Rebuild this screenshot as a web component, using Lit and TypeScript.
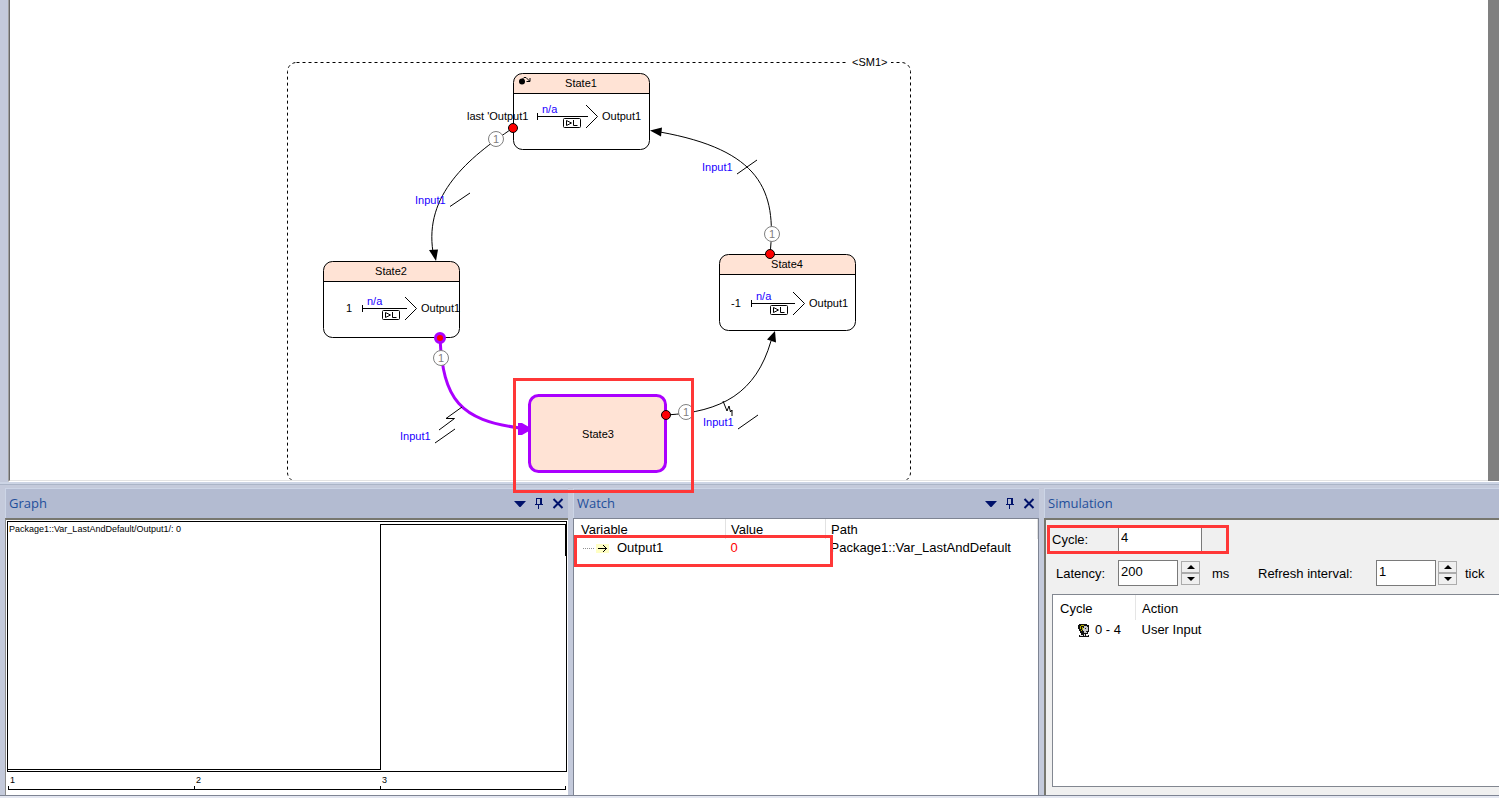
import { LitElement, html, svg, css } from "lit";
import { customElement, property } from "lit/decorators.js";

interface StateNode {
  x: number;
  y: number;
  name: string;
  input: string;
  inputX: number;
  flowY: number;
  barX: number;
  tipX: number;
}

const STATES: StateNode[] = [
  { x: 513, y: 73, name: "State1", input: "last 'Output1", inputX: 467, flowY: 116, barX: 537, tipX: 598 },
  { x: 323, y: 261, name: "State2", input: "1", inputX: 346, flowY: 308, barX: 362, tipX: 417 },
  { x: 719, y: 254, name: "State4", input: "-1", inputX: 731, flowY: 303, barX: 751, tipX: 805 },
];

@customElement("state-canvas")
class StateCanvas extends LitElement {
  static styles = css`
    :host { display: block; position: relative; min-width: 0; min-height: 0; }
    .frame {
      box-sizing: border-box; height: 100%; display: flex;
      border-left: 1px solid #a0a0a0; border-bottom: 1px solid #ffffff;
    }
    .sheet {
      flex: 1; min-width: 0; box-sizing: border-box; background: #fff; overflow: hidden;
      border-left: 1px solid #696969; border-bottom: 1px solid #e3e3e3;
    }
    .edge { flex: 0 0 11px; background: #808080; }
    svg { display: block; width: 100%; height: 100%; font: 11px "Liberation Sans", Arial, sans-serif; }
    .line { fill: none; stroke: #000; stroke-width: 1; }
    .crisp { shape-rendering: crispEdges; }
    .dash { stroke-dasharray: 3 3; }
    .active { fill: none; stroke: #aa00ff; stroke-width: 3; }
    .filled { fill: #ffe3d5; }
    .head { fill: #ffe3d5; }
    .blue { fill: #1a00ff; }
    .mid { text-anchor: middle; }
    .badge { fill: #fff; stroke: #808080; }
    .num { fill: #808080; text-anchor: middle; }
    .mark {
      position: absolute; left: 505px; top: 378px; width: 181px; height: 115px;
      box-sizing: border-box; border: 3px solid #ff3737; z-index: 2; pointer-events: none;
    }
  `;

  private node(s: StateNode) {
    const y = s.flowY;
    const t = s.tipX;
    return svg`
      <path class="head" d="M${s.x + 0.5} ${s.y + 20.5}v-11a9 9 0 0 1 9-9h118a9 9 0 0 1 9 9v11z" />
      <rect class="line" x=${s.x + 0.5} y=${s.y + 0.5} width="136" height="76" rx="9" />
      <path class="line crisp" d="M${s.x} ${s.y + 20.5}h137" />
      <text class="mid" x=${s.x + 68} y=${s.y + 14}>${s.name}</text>
      <text x=${s.inputX} y=${y + 4}>${s.input}</text>
      <path class="line crisp" d="M${s.barX + 0.5} ${y - 3}v7M${s.barX} ${y + 0.5}H${t - 10}" />
      <path class="line" d="M${t - 12} ${y - 11}L${t - 0.5} ${y + 0.5}L${t - 12} ${y + 12}" />
      <text class="blue" x=${s.barX + 5} y=${y - 3}>n/a</text>
      <rect class="line" x=${t - 34.5} y=${y + 2.5} width="17" height="9" rx="1" />
      <path class="line" d="M${t - 31.5} ${y + 4.5}v5l5-2.5zM${t - 24.5} ${y + 4}v5.5h4" />
      <text x=${t + 4} y=${y + 4}>Output1</text>
    `;
  }

  private badge(x: number, y: number) {
    return svg`<circle class="badge" cx=${x} cy=${y} r="7.5" /><text class="num" x=${x} y=${y + 4}>1</text>`;
  }

  render() {
    return html`
      <div class="frame">
        <div class="sheet">
          <svg role="img" aria-label="State machine SM1">
            <g transform="translate(-10 0)">
              <rect class="line dash" x="287.5" y="62.5" width="623" height="419" rx="9" />
              <rect x="848" y="56" width="43" height="12" fill="#fff" />
              <text x="852" y="66">&lt;SM1&gt;</text>
              ${STATES.map((s) => this.node(s))}

              <circle cx="522" cy="81.5" r="3" />
              <path class="line" d="M522 79.500l2-2h2l3.500 3.500M526.500 81.500h3.500v-3.500" />

              <path class="line" d="M513 128C468 158 424 195 433 252" />
              <path d="M429 250l9-0.500l-2 11.500z" />
              <path class="line" d="M770 254C777 190 760 150 660 132" />
              <path d="M650 130.500l12-3l-1 9z" />
              <path class="line" d="M666 415C722 412 756 393 771 341" />
              <path d="M775 331l-8 8.500l9 3z" />
              <path class="active" d="M440 338C443 400 460 420 520 428" />
              <path d="M518 423h4l7 4v4l-7 4h-4z" fill="#aa00ff" />
              <rect class="active filled" x="529.500" y="395.500" width="136" height="76" rx="9" />
              <text class="mid" x="598" y="438">State3</text>

              <circle cx="513" cy="128" r="4.500" fill="#f00" stroke="#000" />
              <circle cx="770" cy="254" r="4.500" fill="#f00" stroke="#000" />
              <circle cx="666" cy="415" r="4.500" fill="#f00" stroke="#000" />
              <circle cx="440" cy="338" r="4.500" fill="#f00" stroke="#aa00ff" stroke-width="3" />
              ${this.badge(496, 139)} ${this.badge(772, 234)} ${this.badge(441, 358)} ${this.badge(686, 412)}

              <text class="blue" x="415" y="204">Input1</text>
              <text class="blue" x="702" y="171">Input1</text>
              <text class="blue" x="400" y="440">Input1</text>
              <text class="blue" x="703" y="426">Input1</text>
              <path class="line" d="M450 206.500l20-13.500M737 174l20-14M435 443l20-14M738 429l20-14" />
              <path class="line" d="M462 407l-16 11.500h8.500L439 430M723 401l4 10l2-5l1.500 6l1.500-2v6" />
            </g>
          </svg>
        </div>
        <div class="edge"></div>
      </div>
      <div class="mark"></div>
    `;
  }
}

@customElement("dock-panel")
class DockPanel extends LitElement {
  @property() heading = "";
  @property({ type: Boolean }) tools = false;

  static styles = css`
    :host { display: flex; flex-direction: column; min-width: 0; min-height: 0; }
    .bar {
      flex: 0 0 30px; box-sizing: border-box; display: flex; align-items: center;
      padding: 0 1px 1px 3px; background: #b3bbd1; border-top: 1px solid #ccd5e6;
      border-left: 1px solid #ccd5e6;
    }
    h2 { flex: 1; margin: 0; font: 13px/18px "Open Sans", "Noto Sans", sans-serif; color: #1f4f9b; }
    button { border: 0; padding: 0; background: none; width: 19px; height: 16px; }
    button svg { display: block; margin: 0 auto; }
    .body { flex: 1; min-height: 0; display: flex; flex-direction: column; }
  `;

  render() {
    return html`
      <div class="bar">
        <h2>${this.heading}</h2>
        ${this.tools
          ? html`
              <button aria-label="Menu">
                <svg width="12" height="16"><path d="M0 6h12L6.500 12h-1z" fill="#00126b" /></svg>
              </button>
              <button aria-label="Pin">
                <svg width="10" height="16" shape-rendering="crispEdges">
                  <path d="M2 3h6v6h1v1H5v4H4v-4H1V9h1zM3 4v5h3V4z" fill="#00126b" fill-rule="evenodd" />
                </svg>
              </button>
              <button aria-label="Close">
                <svg width="12" height="16"><path d="M1.500 4l9 9M10.500 4l-9 9" stroke="#00126b" stroke-width="2" /></svg>
              </button>
            `
          : null}
      </div>
      <div class="body"><slot></slot></div>
    `;
  }
}

@customElement("graph-view")
class GraphView extends LitElement {
  static styles = css`
    :host {
      flex: 1; min-height: 0; display: flex; flex-direction: column; background: #fff;
      border-left: 1px solid #8c8c8c; border-top: 2px solid #77776f; padding: 1px 1px 0 1px;
      font: 9px/11px "Liberation Sans", Arial, sans-serif; color: #000;
    }
    .plot { flex: 1; min-height: 0; border: 1px solid #000; position: relative; }
    .trace { display: block; width: 100%; height: 100%; shape-rendering: crispEdges; }
    .trace line { stroke: #000; }
    .legend { position: absolute; left: 1px; top: 2px; white-space: nowrap; }
    .axis {
      flex: 0 0 18px; box-sizing: border-box; margin: 0 1px 5px; display: grid;
      grid-template-columns: 2fr 2fr 2fr; border-bottom: 1px solid #000;
    }
    .tick { padding: 3px 0 0 2px; background: linear-gradient(#000, #000) left bottom / 1px 3px no-repeat; }
    .tick:last-child {
      background: linear-gradient(#000, #000) left bottom / 1px 3px no-repeat,
        linear-gradient(#000, #000) right bottom / 1px 3px no-repeat;
    }
  `;

  render() {
    return html`
      <div class="plot">
        <svg class="trace" aria-label="Output1 over cycles">
          <line x1="0" y1="99.400%" x2="66.670%" y2="99.400%" />
          <line x1="66.670%" y1="99.600%" x2="66.670%" y2="1%" />
          <line x1="66.670%" y1="1%" x2="100%" y2="1%" />
          <line x1="99.900%" y1="1%" x2="99.900%" y2="13.500%" />
        </svg>
        <span class="legend">Package1::Var_LastAndDefault/Output1/: 0</span>
      </div>
      <div class="axis">${[1, 2, 3].map((n) => html`<span class="tick">${n}</span>`)}</div>
    `;
  }
}

@customElement("watch-view")
class WatchView extends LitElement {
  static styles = css`
    :host {
      flex: 1; min-height: 0; display: block; position: relative; background: #fff;
      border: 1px solid #7e8493; border-bottom: 0;
      font: 13px/18px "Liberation Sans", Arial, sans-serif; color: #000;
    }
    table { width: 100%; border-collapse: collapse; table-layout: fixed; }
    th, td { font-weight: 400; text-align: left; padding: 0 0 0 5px; height: 18px; white-space: nowrap; }
    th { border-right: 1px solid #e2e2e2; padding-top: 2px; height: 17px; }
    .first { padding-left: 7px; }
    .variable { width: 144px; }
    .value { width: 94px; }
    .item { display: flex; align-items: center; padding-left: 2px; }
    .item svg { margin-right: 8px; }
    .red { color: #f00; }
    .mark {
      position: absolute; left: 0; top: 16px; width: 259px; height: 32px; box-sizing: border-box;
      border: 3px solid #ff3737; pointer-events: none;
    }
  `;

  render() {
    return html`
      <table>
        <thead>
          <tr><th class="first variable">Variable</th><th class="value">Value</th><th>Path</th></tr>
        </thead>
        <tbody>
          <tr>
            <td class="first">
              <span class="item">
                <svg width="26" height="14">
                  <path d="M0 7.500h12" stroke="#909090" stroke-dasharray="1 1" />
                  <rect x="13" y="3" width="13" height="9" fill="#ffffc4" />
                  <path d="M15 7.500h9M20 4l3.500 3.500L20 11" fill="none" stroke="#000" />
                </svg>
                Output1
              </span>
            </td>
            <td class="red">0</td>
            <td>Package1::Var_LastAndDefault</td>
          </tr>
        </tbody>
      </table>
      <div class="mark"></div>
    `;
  }
}

@customElement("simulation-view")
class SimulationView extends LitElement {
  static styles = css`
    :host {
      flex: 1; min-height: 0; display: flex; flex-direction: column; background: #f0f0f0;
      border-left: 2px solid #77776f; border-top: 2px solid #77776f;
      font: 13px/16px "Liberation Sans", Arial, sans-serif; color: #000;
    }
    .row { display: grid; align-items: center; position: relative; }
    .cycle { grid-template-columns: 72px 84px; margin-top: 6px; height: 26px; }
    .cycle label { padding-left: 6px; }
    .timing {
      grid-template-columns: 72px 60px 3px 19px 12px 46px 118px 60px 2px 19px 8px 1fr;
      margin-top: 8px; height: 26px; white-space: nowrap;
    }
    .timing label { padding-left: 10px; }
    .timing .refresh { padding-left: 0; }
    label, .unit { padding-top: 2px; }
    input {
      box-sizing: border-box; width: 100%; height: 26px; margin: 0; padding: 0 2px 3px; border-radius: 0;
      border: 1px solid #7a7a7a; background: #fff; font: inherit; color: #000;
    }
    .spin { display: flex; flex-direction: column; }
    .spin button {
      height: 12px; padding: 0; border: 1px solid #acacac; background: #f0f0f0; display: grid; place-items: center;
    }
    .c4 { grid-column: 4; }
    .c6 { grid-column: 6; }
    .c7 { grid-column: 7; }
    .c8 { grid-column: 8; }
    .c10 { grid-column: 10; }
    .c12 { grid-column: 12; }
    .mark {
      position: absolute; left: 1px; top: -1px; width: 182px; height: 29px; box-sizing: border-box;
      border: 3px solid #ff3737; pointer-events: none;
    }
    .list {
      flex: 1; min-height: 0; margin: 8px 0 8px 6px; background: #fff;
      border: 1px solid #828790; border-right: 0;
    }
    table { border-collapse: collapse; width: 100%; table-layout: fixed; }
    th, td { font-weight: 400; text-align: left; height: 22px; padding: 0 0 0 6px; }
    td { height: 20px; }
    thead th { height: 23px; padding-top: 2px; }
    .first { width: 75px; padding-left: 7px; border-right: 1px solid #e5e5e5; }
    td.user { padding-left: 25px; }
    .user span { display: flex; align-items: center; gap: 5px; white-space: nowrap; }
  `;

  private spin(label: string, cls: string) {
    return html`
      <span class="spin ${cls}">
        <button aria-label="Increase ${label}"><svg width="8" height="4"><path d="M4 0l4 4H0z" /></svg></button>
        <button aria-label="Decrease ${label}"><svg width="8" height="4"><path d="M0 0h8L4 4z" /></svg></button>
      </span>
    `;
  }

  render() {
    return html`
      <div class="row cycle">
        <label for="cycle">Cycle:</label>
        <input id="cycle" value="4" />
        <div class="mark"></div>
      </div>
      <div class="row timing">
        <label for="latency">Latency:</label>
        <input id="latency" value="200" />
        ${this.spin("latency", "c4")}
        <span class="unit c6">ms</span>
        <label class="refresh c7" for="refresh">Refresh interval:</label>
        <input class="c8" id="refresh" value="1" />
        ${this.spin("refresh interval", "c10")}
        <span class="unit c12">tick</span>
      </div>
      <div class="list">
        <table>
          <thead><tr><th class="first">Cycle</th><th>Action</th></tr></thead>
          <tbody>
            <tr>
              <td class="user">
                <span>
                  <svg width="12" height="13" shape-rendering="crispEdges">
                    <path d="M1 0h8v1h2v7h-1v2H8v1h3v2H1v-2h2V9H2V7H1V5H0V1h1z" fill="#111" />
                    <path d="M6 2h3v1h1v4H9v2H6V7H5V4h1z" fill="#c8c8c8" />
                    <path d="M3 1h3v1H3zM2 2h1v3H2zM4 3h1v3H4zM3 6h1v1H3z" fill="#b8b000" />
                    <path d="M7 4h1v1H7zM8 7h1v1H8z" fill="#222" />
                    <path d="M2 11h3v1H2zM6 10h1v2H6zM8 11h2v1H8z" fill="#ddd" />
                  </svg>
                  0 - 4
                </span>
              </td>
              <td>User Input</td>
            </tr>
          </tbody>
        </table>
      </div>
    `;
  }
}

@customElement("app-root")
class AppRoot extends LitElement {
  static styles = css`
    :host {
      display: grid; grid-template-rows: minmax(0, 1fr) 316px; height: 100vh; overflow: hidden;
      background: #c4cadb;
    }
    .canvas { margin-left: 8px; }
    .dock {
      box-sizing: border-box; min-height: 0; display: grid; gap: 5px; padding: 4px 0 0 5px;
      grid-template-columns: 563fr 466fr 455fr; border-bottom: 2px solid #e4e7f1;
      border-top: 2px solid #cdd5e5; box-shadow: inset 0 1px #abb5c7, inset 0 -1px #7e8493;
    }
    .panel { margin-bottom: 1px; }
  `;

  render() {
    return html`
      <state-canvas class="canvas"></state-canvas>
      <div class="dock">
        <dock-panel class="panel" heading="Graph" tools><graph-view></graph-view></dock-panel>
        <dock-panel class="panel" heading="Watch" tools><watch-view></watch-view></dock-panel>
        <dock-panel class="panel" heading="Simulation"><simulation-view></simulation-view></dock-panel>
      </div>
    `;
  }
}
